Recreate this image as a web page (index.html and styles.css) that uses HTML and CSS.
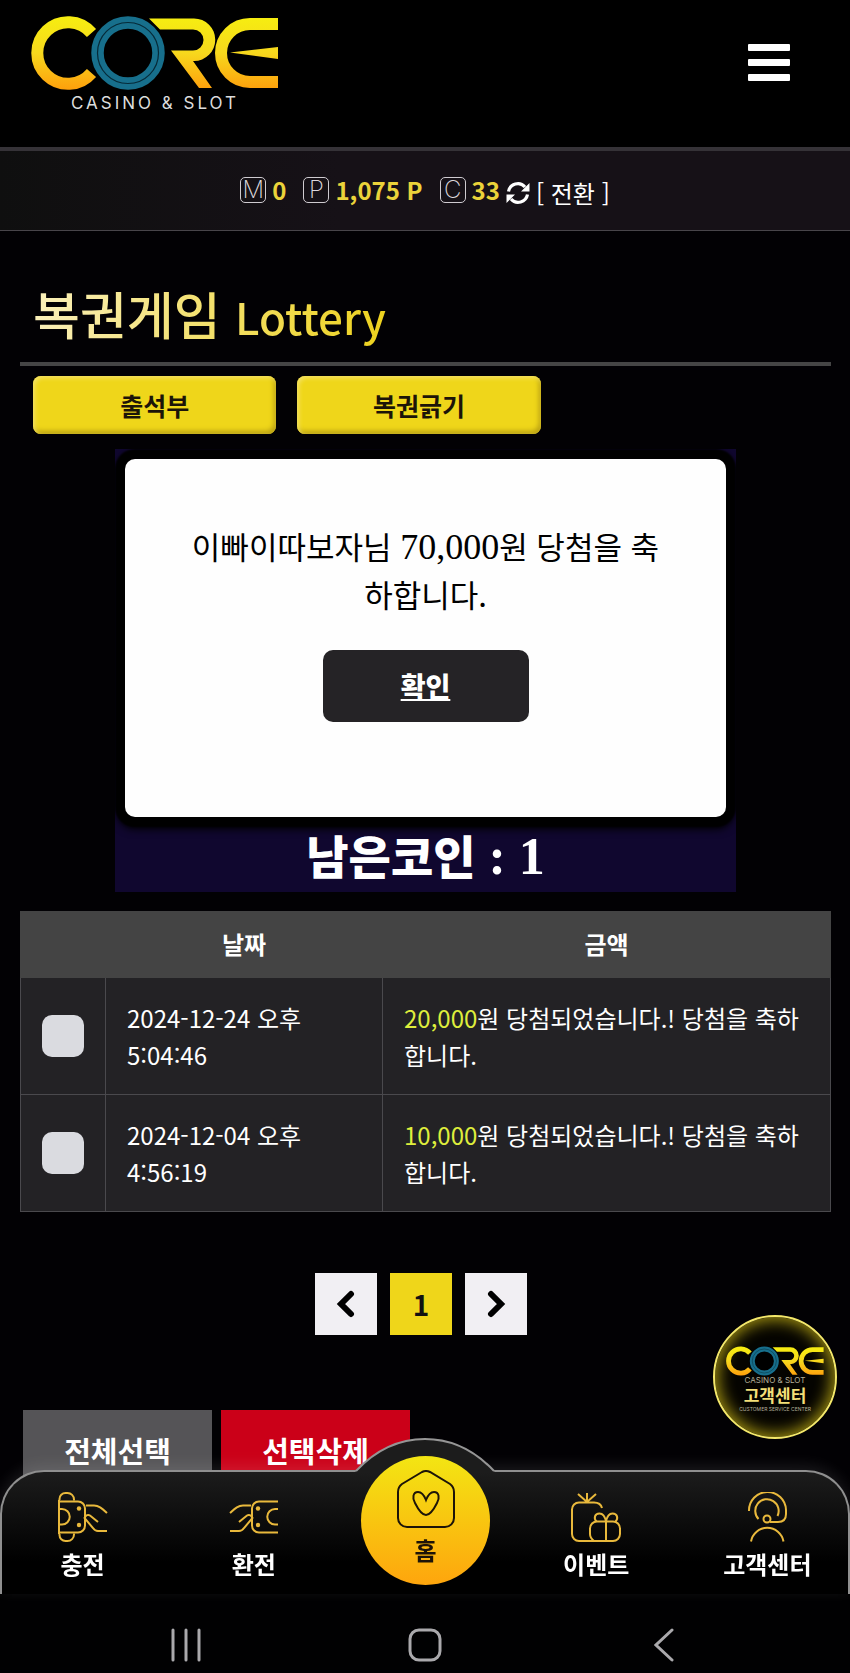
FILE: index.html
```html
<!DOCTYPE html>
<html lang="ko">

<head>
    <meta charset="UTF-8">
    <meta name="viewport" content="width=device-width, initial-scale=1">
    <title>복권게임 Lottery</title>

    <link rel="stylesheet" href="styles.css">
</head>

<body>
    <!-- Shared drawings -->
    <svg class="defs" width="0" height="0" aria-hidden="true">
        <defs>
            <linearGradient id="gold" gradientUnits="userSpaceOnUse" x1="0" y1="0" x2="0" y2="74">
                <stop offset="0" stop-color="#f6ee10" />
                <stop offset="0.5" stop-color="#f7d81d" />
                <stop offset="1" stop-color="#fe9f0c" />
            </linearGradient>
            <symbol id="logo" viewBox="0 0 248 74">
                <path d="M60.500 17A30.800 30.800 0 1 0 60.500 57" fill="none" stroke="url(#gold)" stroke-width="12" />
                <circle cx="97" cy="37" r="38" fill="#000" />
                <circle cx="97" cy="37" r="30.500" fill="none" stroke="#176f8c" stroke-width="12.500" />
                <circle cx="97" cy="37" r="30.500" fill="none" stroke="#062a38" stroke-width="1.200" />
                <path d="M118 2.500H163A21 21 0 0 1 163 45H162L181 72H168L140 34.500H162A10.500 10.500 0 0 0 162 13.500H129Z" fill="url(#gold)" />
                <path d="M247 8H219A29 29 0 0 0 219 66H247" fill="none" stroke="url(#gold)" stroke-width="12" />
                <path d="M199 36.500L247 31V43Z" fill="url(#gold)" />
            </symbol>
            <symbol id="hand-card" viewBox="0 0 50 50">
                <path d="M1 9.500H20a7 7 0 0 1 7 7v17a7 7 0 0 1-7 7H1M1 17h3a7.500 7.500 0 0 1 0 15.500H1" />
                <path d="M28 13.500h8c5 0 8 3 13 7.500M40 30l-8-6.500q-3-2-5.500 2.500l8.500 10q2 3 5 3h9" />
                <circle class="dot" cx="21" cy="16.500" r="2.200" />
                <circle class="dot" cx="21" cy="33" r="2.200" />
            </symbol>
        </defs>
    </svg>

    <header class="top">
        <a class="brand" href="#">
            <svg class="brand-logo" role="img" aria-label="CORE"><use href="#logo" /></svg>
            <span>CASINO &amp; SLOT</span>
        </a>
        <button class="menu" aria-label="메뉴"><i></i><i></i><i></i></button>
    </header>

    <div class="balance">
        <div class="wallet"><i>M</i><b>0</b></div>
        <div class="wallet"><i>P</i><b>1,075 P</b></div>
        <div class="wallet"><i>C</i><b>33</b></div>
        <a class="convert" href="#">
            <svg width="24" height="24" viewBox="0 0 24 24">
                <path d="M2.500 10.500A9.500 9.500 0 0 1 19 6M21.500 13.500A9.500 9.500 0 0 1 5 18" fill="none" stroke="#fff" stroke-width="3.200" />
                <path d="M23.500 2V10.500H15ZM.5 22V13.500H9Z" fill="#fff" />
            </svg>
            [ 전환 ]
        </a>
    </div>

    <main>
        <h1><span>복권게임 <small>Lottery</small></span></h1>

        <div class="tabs">
            <button>출석부</button>
            <button>복권긁기</button>
        </div>

        <section class="game">
            <div class="popup" role="dialog">
                <p>이빠이따보자님 <span class="num">70,000</span>원 당첨을 축하합니다.</p>
                <a href="#">확인</a>
            </div>
            <div class="coins">남은코인 <span class="num">: 1</span></div>
        </section>

        <table class="history">
            <thead>
                <tr>
                    <th class="col-check"></th>
                    <th class="col-date">날짜</th>
                    <th>금액</th>
                </tr>
            </thead>
            <tbody>
                <tr>
                    <td><input type="checkbox" aria-label="2024-12-24 선택"></td>
                    <td>2024-12-24 오후 5:04:46</td>
                    <td><em>20,000</em>원 당첨되었습니다.! 당첨을 축하합니다.</td>
                </tr>
                <tr>
                    <td><input type="checkbox" aria-label="2024-12-04 선택"></td>
                    <td>2024-12-04 오후 4:56:19</td>
                    <td><em>10,000</em>원 당첨되었습니다.! 당첨을 축하합니다.</td>
                </tr>
            </tbody>
        </table>

        <div class="pages">
            <a href="#" aria-label="이전">
                <svg width="20" height="28" viewBox="0 0 20 28"><path d="M15 4L5 14L15 24" /></svg>
            </a>
            <a class="current" href="#">1</a>
            <a href="#" aria-label="다음">
                <svg width="20" height="28" viewBox="0 0 20 28"><path d="M5 4L15 14L5 24" /></svg>
            </a>
        </div>

        <div class="actions">
            <button>전체선택</button>
            <button class="delete">선택삭제</button>
        </div>
    </main>

    <a class="support" href="#">
        <svg class="support-logo" role="img" aria-label="CORE"><use href="#logo" /></svg>
        <span class="sub">CASINO &amp; SLOT</span>
        <strong>고객센터</strong>
        <span class="tiny">CUSTOMER SERVICE CENTER</span>
    </a>

    <!-- Fixed bottom menu -->
    <footer class="bottom">
        <nav class="dock">
            <svg class="bump" width="140" height="35" viewBox="0 0 140 35">
                <path d="M0 35L1 33Q31 1 70 1T139 33L140 35Z" fill="#1c1c1c" />
                <path d="M1 33Q31 1 70 1T139 33" fill="none" stroke="#959595" stroke-width="2" />
            </svg>
            <a href="#">
                <svg class="icon" viewBox="0 0 50 50">
                    <use href="#hand-card" />
                    <path d="M1 8V42M1.500 8V7a6 6 0 0 1 6-6h2a6.500 6.500 0 0 1 6.500 6.500v1M1.500 42v1a6 6 0 0 0 6 6h2a6.500 6.500 0 0 0 6.500-6.500v-1" />
                </svg>
                충전
            </a>
            <a href="#">
                <svg class="icon" viewBox="0 0 50 50">
                    <g transform="translate(50 0) scale(-1 1)"><use href="#hand-card" /></g>
                </svg>
                환전
            </a>
            <a class="home" href="#">
                <svg viewBox="0 0 58 58">
                    <path d="M25 2L5 14q-4 3-4 8v26a9 9 0 0 0 9 9h38a9 9 0 0 0 9-9v-26q0-5-4-8L33 2q-4-2-8 0Z" />
                    <path d="M29 30c-2-5-5-8-8-8c-5 0-6 6-3 11c3 6 7 12 11 12s8-6 11-12c3-5 2-11-3-11c-3 0-6 3-8 8Z" />
                </svg>
                홈
            </a>
            <a href="#">
                <svg class="icon" viewBox="0 0 50 50">
                    <path d="M16 10V1M7 2l9 8l9-8M31 16c-1-4-4-5.500-8-5.500H8a7 7 0 0 0-7 7V42a7 7 0 0 0 7 7h34a7 7 0 0 0 7-7v-5.500a7 7 0 0 0-7-7H26a7 7 0 0 0-7 7V42q0 4 4 7M35 29.500V49" />
                    <path d="M35 29.500c-1-5-3-8-6.500-8c-5 0-6 5-3 8M35 29.500c1-5 3-8 6.500-8c5 0 6 5 3 8" />
                </svg>
                이벤트
            </a>
            <a href="#">
                <svg class="icon" viewBox="0 0 50 50">
                    <path d="M7 19a18.500 18.500 0 0 1 37-1v4q0 8-8 8h-8M16.500 27a11.700 11.700 0 1 1 19-3M9 49.500a16.500 16.500 0 0 1 32.500 0" />
                    <circle cx="25" cy="27" r="3.500" />
                </svg>
                고객센터
            </a>
        </nav>
        <div class="system">
            <button aria-label="최근 앱">
                <svg width="32" height="34" viewBox="0 0 32 34"><path d="M3 2V32M16 2V32M29 2V32" /></svg>
            </button>
            <button aria-label="홈 화면">
                <svg width="34" height="34" viewBox="0 0 34 34"><rect x="2" y="2" width="30" height="30" rx="9" /></svg>
            </button>
            <button aria-label="뒤로">
                <svg width="20" height="34" viewBox="0 0 20 34"><path d="M18 2L2 17L18 32" /></svg>
            </button>
        </div>
    </footer>
</body>

</html>
```
FILE: styles.css
```css
* {
    box-sizing: border-box;
}

body {
    font-family: "Noto Sans CJK KR", sans-serif;
    margin: 0;
    padding: 0;
    background-color: #020104;
    color: #fff;
}

a {
    color: inherit;
    text-decoration: none;
}

button {
    font-family: inherit;
    border: none;
    padding: 0;
    cursor: pointer;
}

svg {
    display: block;
}

.defs {
    position: absolute;
}

/* Header */
.top {
    display: flex;
    justify-content: space-between;
    align-items: flex-start;
    height: 147px;
    padding: 16px 60px 0 31px;
    background-color: #000;
}

.brand {
    display: flex;
    flex-direction: column;
    align-items: center;
    font-family: Inter, sans-serif;
    font-size: 17px;
    line-height: 26px;
    letter-spacing: 3px;
    color: #ddd;
}

.brand-logo {
    width: 248px;
    height: 74px;
}

.menu {
    display: flex;
    flex-direction: column;
    gap: 8px;
    width: 42px;
    margin-top: 28px;
    background: none;
}

.menu i {
    width: 100%;
    height: 7px;
    border-radius: 1px;
    background-color: #fff;
}

/* Balance bar */
.balance {
    display: flex;
    justify-content: center;
    align-items: center;
    height: 84px;
    padding-bottom: 2px;
    border-top: 4px solid #353237;
    border-bottom: 1px solid #48454a;
    background: linear-gradient(90deg, #0f0f0f, #161117 40%);
    font-size: 24px;
    line-height: 36px;
}

.wallet {
    display: flex;
    align-items: center;
    gap: 6px;
    margin-right: 17px;
}

.wallet:nth-child(3) {
    margin-right: 6px;
}

.wallet i {
    width: 26px;
    height: 26px;
    border: 1px solid #cfcbd0;
    border-radius: 5px;
    font-family: Inter, sans-serif;
    font-size: 24px;
    font-style: normal;
    font-weight: 200;
    line-height: 24px;
    text-align: center;
    color: #dcd8dd;
}

.wallet b {
    color: #ebd33a;
}

.convert {
    display: flex;
    align-items: center;
    gap: 6px;
    padding-top: 6px;
}

main {
    padding: 50px 19px 0 20px;
}

h1 {
    margin: 0;
    padding: 0 13px 14px;
    border-bottom: 4px solid #454545;
    font-size: 51px;
    font-weight: 500;
    line-height: 64px;
}

h1 span {
    background: linear-gradient(100deg, #faf0bd, #edd11c);
    background-clip: text;
    -webkit-background-clip: text;
    color: transparent;
}

h1 small {
    font-size: 44px;
}

.tabs {
    display: flex;
    gap: 21px;
    padding: 10px 13px 15px;
}

.tabs button {
    width: 31%;
    height: 58px;
    border-radius: 8px;
    background-color: #efd61a;
    box-shadow: inset 2px 2px 4px #f5e366, inset -2px -3px 5px #b89f12;
    font-size: 25px;
    font-weight: 700;
    line-height: 54px;
    color: #1c1408;
}

/* Lottery game */
.game {
    width: 621px;
    max-width: 100%;
    margin: 0 auto;
    padding: 10px 10px 0;
    background-color: #10072f;
    overflow: hidden;
}

.popup {
    display: flex;
    flex-direction: column;
    align-items: center;
    min-height: 358px;
    padding: 63px 62px;
    border-radius: 10px;
    background-color: #fefefe;
    box-shadow: 0 0 2px 10px #000, 0 4px 8px 8px #000;
    color: #000;
}

.popup p {
    margin: 0 0 32px;
    font-size: 31px;
    line-height: 48px;
    text-align: center;
    word-break: break-all;
}

.num {
    font-family: "Liberation Serif", serif;
}

.popup .num {
    font-size: 36px;
    line-height: 36px;
}

.popup a {
    width: 206px;
    border-radius: 10px;
    background-color: #252326;
    font-size: 27px;
    font-weight: 900;
    line-height: 72px;
    text-align: center;
    text-decoration: underline;
    color: #fff;
}

.coins {
    font-size: 46px;
    font-weight: 900;
    line-height: 75px;
    text-align: center;
}

.coins .num {
    font-size: 52px;
    line-height: 52px;
}

/* History table */
.history {
    width: 100%;
    margin-top: 19px;
    border-collapse: collapse;
    table-layout: fixed;
    background-color: #232225;
    font-size: 24px;
    line-height: 37px;
}

.history th {
    height: 66px;
    padding: 0 0 2px;
    background-color: #444;
    border: 1px solid #444;
}

.history td {
    padding: 21px;
    border: 1px solid #4a494d;
}

.history em {
    font-style: normal;
    color: #dfee3c;
}

.history .col-check {
    width: 85px;
}

.history .col-date {
    width: 277px;
}

input[type="checkbox"] {
    display: block;
    appearance: none;
    width: 42px;
    height: 42px;
    margin: 0 auto;
    border-radius: 10px;
    background-color: #dadbe0;
}

input[type="checkbox"]:checked {
    background-color: #efd61a;
}

.pages {
    display: flex;
    justify-content: center;
    gap: 13px;
    margin-top: 61px;
    padding-right: 9px;
}

.pages a {
    display: flex;
    justify-content: center;
    align-items: center;
    width: 62px;
    height: 62px;
    background-color: #f1eff3;
    font-size: 28px;
    font-weight: 700;
    color: #111;
}

.pages .current {
    background-color: #efd61a;
}

.pages path {
    fill: none;
    stroke: #000;
    stroke-width: 6;
    stroke-linecap: round;
}

.actions {
    display: flex;
    gap: 9px;
    margin-top: 75px;
    padding-left: 3px;
}

.actions button {
    width: 189px;
    height: 80px;
    background-color: #555457;
    font-size: 29px;
    font-weight: 700;
    color: #fff;
}

.actions .delete {
    background-color: #cb0018;
}

/* Floating support badge */
.support {
    position: fixed;
    right: 13px;
    bottom: 234px;
    display: flex;
    flex-direction: column;
    align-items: center;
    width: 124px;
    height: 124px;
    padding-top: 29px;
    border: 2px solid #f4e86a;
    border-radius: 50%;
    background-color: #050400;
    box-shadow: inset 0 0 16px 3px #a39310;
}

.support-logo {
    width: 98px;
    height: 30px;
}

.support strong {
    font-size: 17px;
    line-height: 20px;
    color: #f3df79;
}

.sub,
.tiny {
    font-family: Inter, sans-serif;
    line-height: 9px;
    color: #b5b09a;
}

.sub {
    font-size: 8px;
}

.tiny {
    font-size: 5px;
}

/* Bottom menu */
.bottom {
    position: fixed;
    left: 0;
    right: 0;
    bottom: 0;
    background: linear-gradient(transparent 60px, #000 60px);
}

.dock {
    position: relative;
    display: grid;
    grid-template-columns: repeat(5, 171px);
    grid-template-columns: repeat(5, calc(20% + 2px));
    justify-content: center;
    height: 124px;
    border: 2px solid #8f8f8f;
    border-bottom: none;
    border-radius: 44px 44px 0 0;
    background: linear-gradient(#1c1c1c, #000 90px);
    box-shadow: 0 -4px 16px rgba(255, 255, 255, 0.1);
}

.dock a {
    display: flex;
    flex-direction: column;
    align-items: center;
    gap: 6px;
    padding-top: 20px;
    font-size: 24px;
    font-weight: 700;
    line-height: 32px;
}

.icon {
    width: 50px;
    height: 50px;
    fill: none;
    stroke: #e9b93c;
    stroke-width: 2;
}

.icon .dot,
.dot {
    fill: #e9b93c;
    stroke: none;
}

.bump {
    position: absolute;
    left: 50%;
    top: -34px;
    margin-left: -70px;
}

/* Gold home button sits over the edge of the bar */
.dock .home {
    position: absolute;
    left: 50%;
    top: -16px;
    gap: 6px;
    width: 129px;
    height: 129px;
    margin-left: -64px;
    padding-top: 14px;
    border-radius: 50%;
    background: linear-gradient(#f3e613, #fea50d);
    color: #1d1408;
}

.home svg {
    width: 58px;
    height: 58px;
    fill: none;
    stroke: #1d1408;
    stroke-width: 2;
}

.home + a {
    grid-column: 4;
}

.system {
    display: grid;
    grid-template-columns: repeat(3, 1fr);
    height: 79px;
    padding: 34px 67px 0;
    background-color: #010102;
}

.system button {
    display: flex;
    justify-content: center;
    background: none;
}

.system svg {
    fill: none;
    stroke: #aaa9ac;
    stroke-width: 3;
    stroke-linecap: round;
}
```
